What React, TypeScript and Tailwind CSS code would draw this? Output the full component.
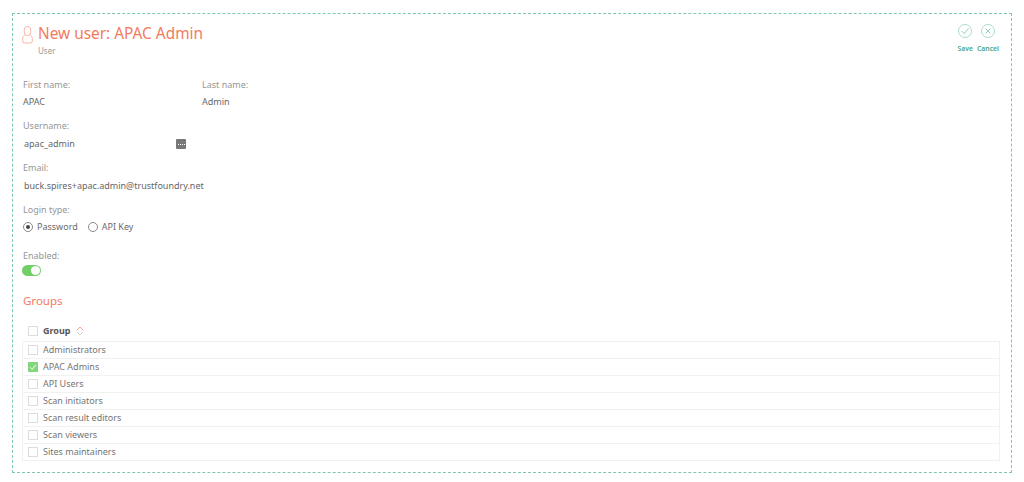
import React from "react";

const groups: [string, boolean][] = [
  ["Administrators", false],
  ["APAC Admins", true],
  ["API Users", false],
  ["Scan initiators", false],
  ["Scan result editors", false],
  ["Scan viewers", false],
  ["Sites maintainers", false],
];

function Box({ checked = false }: { checked?: boolean }) {
  return checked ? (
    <span className="flex h-[10px] w-[10px] shrink-0 items-center justify-center bg-[#84d67a]">
      <svg width="8" height="8" viewBox="0 0 8 8" fill="none" stroke="#fff" strokeWidth="0.9">
        <path d="M1 4.2 L3.2 6.4 L7 1.6" />
      </svg>
    </span>
  ) : (
    <span className="h-[10px] w-[10px] shrink-0 border border-[#dcdcdc] bg-white" />
  );
}

function Label({ children }: { children: React.ReactNode }) {
  return <div className="h-[14px] text-[9px] leading-[14px] text-[#969696]">{children}</div>;
}

function Value({ children, first = false }: { children: React.ReactNode; first?: boolean }) {
  return (
    <div className={first ? "mt-[3px] h-[14px] text-[9px] leading-[14px] text-[#666]" : "mt-[4px] h-[14px] pl-px text-[9px] leading-[14px] text-[#666]"}>
      {children}
    </div>
  );
}

export default function App() {
  return (
    <div className="h-[482px] w-[1024px] overflow-hidden bg-white pl-3 pt-[13px] font-['Noto_Sans',sans-serif]">
      <div className="h-[460px] w-[1000px] border border-dashed border-[#7cc8ac] pl-[10px] pr-[11px] pt-[11px]">
        <div className="flex h-[30px] justify-between">
          <div className="flex">
            <svg width="11" height="18" viewBox="0 0 11 18" fill="none" stroke="#f6b5a3" strokeWidth="1" className="-ml-px mt-[1px]">
              <ellipse cx="5.5" cy="5" rx="3.3" ry="4.5" />
              <path d="M3.2 8.6 C1.6 9.6 0.7 11 0.7 12.8 V15 Q0.7 17 2.7 17 H8.3 Q10.3 17 10.3 15 V12.8 C10.3 11 9.4 9.6 7.8 8.6" />
            </svg>
            <div className="ml-[5px] -mt-px">
              <div className="text-[15.4px] leading-[20px] text-[#f47a5c]">New user: APAC Admin</div>
              <div className="mt-px text-[8px] leading-[11px] text-[#9a9a9a]">User</div>
            </div>
          </div>
          <div className="-mt-px flex gap-[4px] pr-px text-[6.8px] font-semibold leading-[10px] text-[#4aa587]">
            <div className="flex flex-col items-center">
              <svg width="14" height="14" viewBox="0 0 14 14" fill="none" stroke="#a9ddc9" strokeWidth="1">
                <circle cx="7" cy="7" r="6.5" />
                <path d="M3.8 7 L6.2 9.6 L10.6 4.4" stroke="#8fd0b8" />
              </svg>
              <span className="mt-[6px]">Save</span>
            </div>
            <div className="flex flex-col items-center">
              <svg width="14" height="14" viewBox="0 0 14 14" fill="none" stroke="#a9ddc9" strokeWidth="1">
                <circle cx="7" cy="7" r="6.5" />
                <path d="M4.6 4.6 L9.4 9.4 M9.4 4.6 L4.6 9.4" stroke="#8fd0b8" />
              </svg>
              <span className="mt-[6px]">Cancel</span>
            </div>
          </div>
        </div>

        <div className="mt-[23px] flex">
          <div className="w-[179px]"><Label>First name:</Label><Value first>APAC</Value></div>
          <div><Label>Last name:</Label><Value first>Admin</Value></div>
        </div>
        <div className="mt-[10px]">
          <Label>Username:</Label>
          <div className="flex w-[163px] items-start justify-between">
            <Value>apac_admin</Value>
            <span className="mt-[6px] flex h-[10px] w-[10px] items-center justify-center rounded-[1px] bg-[#777]">
              <span className="h-px w-[7px] border-t border-dotted border-white" />
            </span>
          </div>
        </div>
        <div className="mt-[10px]">
          <Label>Email:</Label>
          <Value>buck.spires+apac.admin@trustfoundry.net</Value>
        </div>
        <div className="mt-[10px]">
          <Label>Login type:</Label>
          <div className="mt-[3px] flex h-[14px] items-center text-[9px] text-[#6b6b6b]">
            <span className="flex h-[10px] w-[10px] items-center justify-center rounded-full border border-[#8a8a8a]">
              <span className="h-[4px] w-[4px] rounded-full bg-[#444]" />
            </span>
            <span className="ml-[4px]">Password</span>
            <span className="ml-[10px] h-[10px] w-[10px] rounded-full border border-[#8a8a8a]" />
            <span className="ml-[4px]">API Key</span>
          </div>
        </div>
        <div className="mt-[15px]">
          <Label>Enabled:</Label>
          <div className="-ml-px mt-[2px] flex h-[11px] w-[19px] items-center justify-end rounded-full bg-[#72cf68] pr-px">
            <span className="h-[9px] w-[9px] rounded-full bg-white" />
          </div>
        </div>

        <div className="mt-[16px] h-[18px] text-[11.5px] leading-[18px] text-[#f47a5c]">Groups</div>

        <div className="mt-[12px] flex h-[19px] items-center pl-[5px] pb-[2px] text-[9px] text-[#555]">
          <Box />
          <span className="ml-[5px] font-bold">Group</span>
          <svg width="8" height="10" viewBox="0 0 8 10" fill="none" strokeWidth="0.8" className="ml-[5px]">
            <path d="M1 4 L4 1 L7 4" stroke="#f08a70" />
            <path d="M1 6 L4 9 L7 6" stroke="#c8c8c8" />
          </svg>
        </div>
        <div className="-ml-px w-[978px] border-x border-b border-[#f1f1f1]">
          {groups.map(([name, on]) => (
            <div key={name} className="flex h-[17px] items-center border-t border-[#f1f1f1] pl-[5px] text-[9px] text-[#757575]">
              <Box checked={on} />
              <span className="ml-[5px]">{name}</span>
            </div>
          ))}
        </div>
      </div>
    </div>
  );
}
